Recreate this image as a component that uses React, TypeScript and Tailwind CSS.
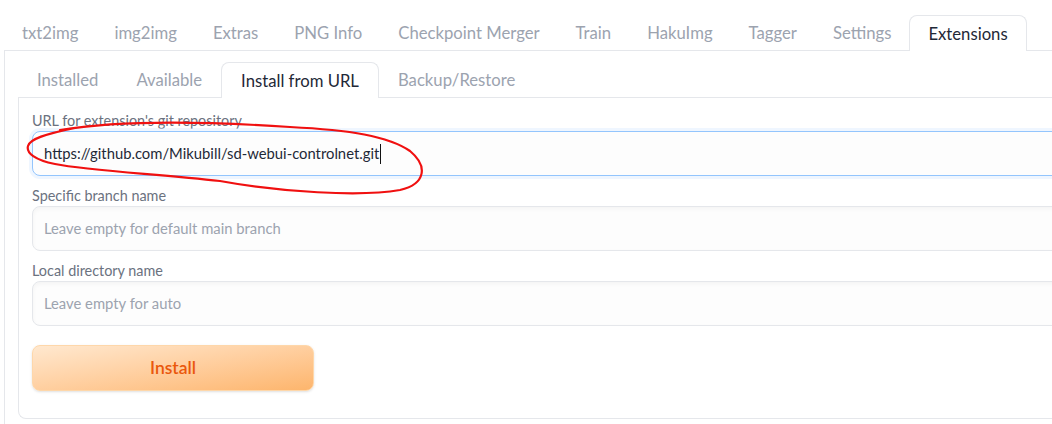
const topTabs = [
  "txt2img",
  "img2img",
  "Extras",
  "PNG Info",
  "Checkpoint Merger",
  "Train",
  "HakuImg",
  "Tagger",
  "Settings",
  "Extensions",
];

const subTabs = ["Installed", "Available", "Install from URL", "Backup/Restore"];

const font = { fontFamily: "Lato, 'Noto Sans', sans-serif" };

function Tab({ label, active, sub }: { label: string; active: boolean; sub?: boolean }) {
  return (
    <div
      className={`flex items-center pt-[3px] text-[16.7px] ${sub ? "px-[19px]" : "px-[18px]"} ${
        active
          ? `relative -mb-px h-[36px] rounded-t-lg border border-b-0 border-[#e5e7eb] bg-white text-[#1f2937] ${
              sub ? "px-[18px]" : "px-[17px]"
            }`
          : "h-[35px] text-[#9ca3af]"
      }`}
    >
      {label}
    </div>
  );
}

function Field({ label, placeholder, value }: { label: string; placeholder?: string; value?: string }) {
  return (
    <div className="flex flex-col">
      <div className="h-5 pt-px text-[14.4px] leading-5 text-[#6b7280]">{label}</div>
      <div
        className={`mt-px flex h-[45px] items-center rounded-lg border bg-[#fdfdfd] px-[11px] text-[14.8px] ${
          value
            ? "border-[#93c5fd] shadow-[0_0_0_3px_rgba(219,234,254,0.45)]"
            : "border-[#e5e7eb] shadow-[inset_0_2px_4px_rgba(0,0,0,0.04)]"
        }`}
      >
        {value ? (
          <span className="flex items-center text-[#1f2937]">
            {value}
            <span className="ml-px inline-block h-5 w-px bg-[#111]" />
          </span>
        ) : (
          <span className="text-[#9ca3af]">{placeholder}</span>
        )}
      </div>
    </div>
  );
}

export default function App() {
  return (
    <div className="relative h-[424px] w-[1052px] overflow-hidden bg-white" style={font}>
      <div className="ml-1 w-[1120px] pt-[15px]">
        {/* top tabs */}
        <div className="flex border-b border-[#e5e7eb]">
          {topTabs.map((t) => (
            <Tab key={t} label={t} active={t === "Extensions"} />
          ))}
        </div>

        {/* outer panel */}
        <div className="h-[400px] border-l border-[#e5e7eb] pl-[13px] pt-[11px]">
          <div className="flex border-b border-[#e5e7eb]">
            {subTabs.map((t) => (
              <Tab key={t} label={t} active={t === "Install from URL"} sub />
            ))}
          </div>

          {/* inner panel */}
          <div className="flex flex-col rounded-bl-lg border-b border-l border-[#e5e7eb] pb-[27px] pl-[13px] pt-3">
            <Field label="URL for extension's git repository" value="https://github.com/Mikubill/sd-webui-controlnet.git" />
            <div className="mt-[9px]">
              <Field label="Specific branch name" placeholder="Leave empty for default main branch" />
            </div>
            <div className="mt-[9px]">
              <Field label="Local directory name" placeholder="Leave empty for auto" />
            </div>
            <button className="mt-[19px] flex h-[46px] w-[282px] items-center justify-center rounded-lg border border-[#fed7aa] bg-gradient-to-br from-[#ffe8cf] to-[#fdb56c] text-[17.5px] font-semibold text-[#ea580c] shadow-sm">
              Install
            </button>
          </div>
        </div>
      </div>

      {/* red annotation */}
      <svg className="pointer-events-none absolute left-0 top-0" width="1052" height="424">
        <path
          d="M 60 130 C 120 120, 200 121, 290 127 C 350 130, 388 136, 410 151 C 428 166, 426 184, 400 190 C 360 197, 280 192, 220 181 C 160 174, 90 171, 55 164 C 35 160, 26 153, 28 146 C 30 139, 45 134, 75 128"
          fill="none"
          stroke="#f01010"
          strokeWidth="2.2"
          strokeLinecap="round"
        />
      </svg>
    </div>
  );
}
